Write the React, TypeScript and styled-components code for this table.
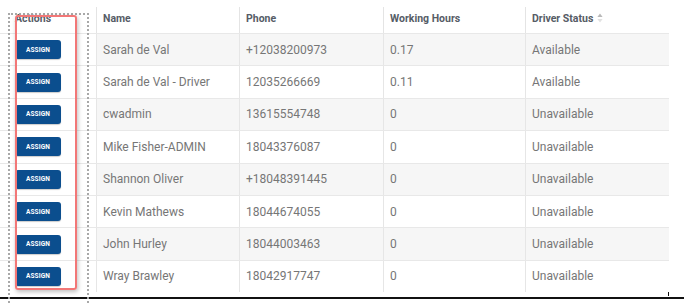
import React from "react";
import styled, { createGlobalStyle } from "styled-components";

const GlobalStyle = createGlobalStyle`
  html, body { margin: 0; padding: 0; background: #ffffff; }
  body { font-family: Roboto, "Liberation Sans", Arial, sans-serif; }
`;

const Page = styled.div`
  position: relative;
  width: 685px;
  height: 303px;
  overflow: hidden;
  padding-top: 7px;
  box-sizing: border-box;
`;

const COLS = "96px 143px 144px 142px 144px";

const Table = styled.div`
  width: 669px;
  display: flex;
  flex-direction: column;
`;

const HeaderRow = styled.div`
  display: grid;
  grid-template-columns: ${COLS};
  height: 26px;
`;

const HeaderCell = styled.div<{ $first?: boolean }>`
  display: flex;
  align-items: center;
  gap: 4px;
  padding: 0 0 4px ${(p) => (p.$first ? "15px" : "6px")};
  border-left: ${(p) => (p.$first ? "none" : "1px solid #e4e4e4")};
  font-size: 10.5px;
  font-weight: 700;
  color: #565c66;
  white-space: nowrap;
`;

const Row = styled.div<{ $striped: boolean }>`
  display: grid;
  grid-template-columns: ${COLS};
  height: 32.4px;
  box-sizing: border-box;
  border-top: 1px solid #e8e8e8;
  background: ${(p) => (p.$striped ? "#f6f6f6" : "#ffffff")};
`;

const Cell = styled.div`
  display: flex;
  align-items: center;
  padding-left: 6px;
  border-left: 1px solid #e6e6e6;
  font-size: 12px;
  color: #767676;
  white-space: nowrap;
`;

const ActionCell = styled.div`
  display: flex;
  align-items: center;
  padding-left: 15px;
  background: #ffffff;
`;

const AssignButton = styled.button`
  width: 46px;
  height: 19px;
  padding: 0;
  border: none;
  border-radius: 3px;
  background: #0b4e8e;
  color: #ffffff;
  font-family: Roboto, "Liberation Sans", Arial, sans-serif;
  font-size: 6.5px;
  font-weight: 700;
  letter-spacing: 0.1px;
  box-shadow: 0 1px 1px rgba(0, 0, 0, 0.2);
`;

const BottomLine = styled.div`
  margin-top: 5px;
  width: 684px;
  height: 2px;
  background: #111111;
`;

const Tick = styled.div`
  position: absolute;
  left: 668px;
  top: 292px;
  width: 1px;
  height: 4px;
  background: #111111;
`;

const DottedFrame = styled.div`
  position: absolute;
  left: 8px;
  top: 13px;
  width: 77px;
  height: 300px;
  border: 2px dotted #a8a8a8;
  border-bottom: none;
  pointer-events: none;
`;

const Highlight = styled.div`
  position: absolute;
  left: 15px;
  top: 15px;
  width: 58px;
  height: 271px;
  border: 2px solid #f27777;
  border-radius: 3px;
  box-shadow: 1px 2px 4px rgba(0, 0, 0, 0.25);
  pointer-events: none;
`;

const SortIcon = () => (
  <svg width="6" height="10" viewBox="0 0 6 10">
    <path d="M3 0.5 L5.6 4 L0.4 4 Z" fill="#b9b9b9" />
    <path d="M3 9.5 L5.6 6 L0.4 6 Z" fill="#e2e2e2" />
  </svg>
);

const drivers = [
  ["Sarah de Val", "+12038200973", "0.17", "Available"],
  ["Sarah de Val - Driver", "12035266669", "0.11", "Available"],
  ["cwadmin", "13615554748", "0", "Unavailable"],
  ["Mike Fisher-ADMIN", "18043376087", "0", "Unavailable"],
  ["Shannon Oliver", "+18048391445", "0", "Unavailable"],
  ["Kevin Mathews", "18044674055", "0", "Unavailable"],
  ["John Hurley", "18044003463", "0", "Unavailable"],
  ["Wray Brawley", "18042917747", "0", "Unavailable"],
];

export default function App() {
  return (
    <>
      <GlobalStyle />
      <Page>
        <Table>
          <HeaderRow>
            <HeaderCell $first>Actions</HeaderCell>
            <HeaderCell>Name</HeaderCell>
            <HeaderCell>Phone</HeaderCell>
            <HeaderCell>Working Hours</HeaderCell>
            <HeaderCell>
              Driver Status <SortIcon />
            </HeaderCell>
          </HeaderRow>
          {drivers.map((d, i) => (
            <Row key={i} $striped={i % 2 === 0}>
              <ActionCell>
                <AssignButton>ASSIGN</AssignButton>
              </ActionCell>
              {d.map((v, j) => (
                <Cell key={j}>{v}</Cell>
              ))}
            </Row>
          ))}
        </Table>
        <BottomLine />
        <Tick />
        <DottedFrame />
        <Highlight />
      </Page>
    </>
  );
}
